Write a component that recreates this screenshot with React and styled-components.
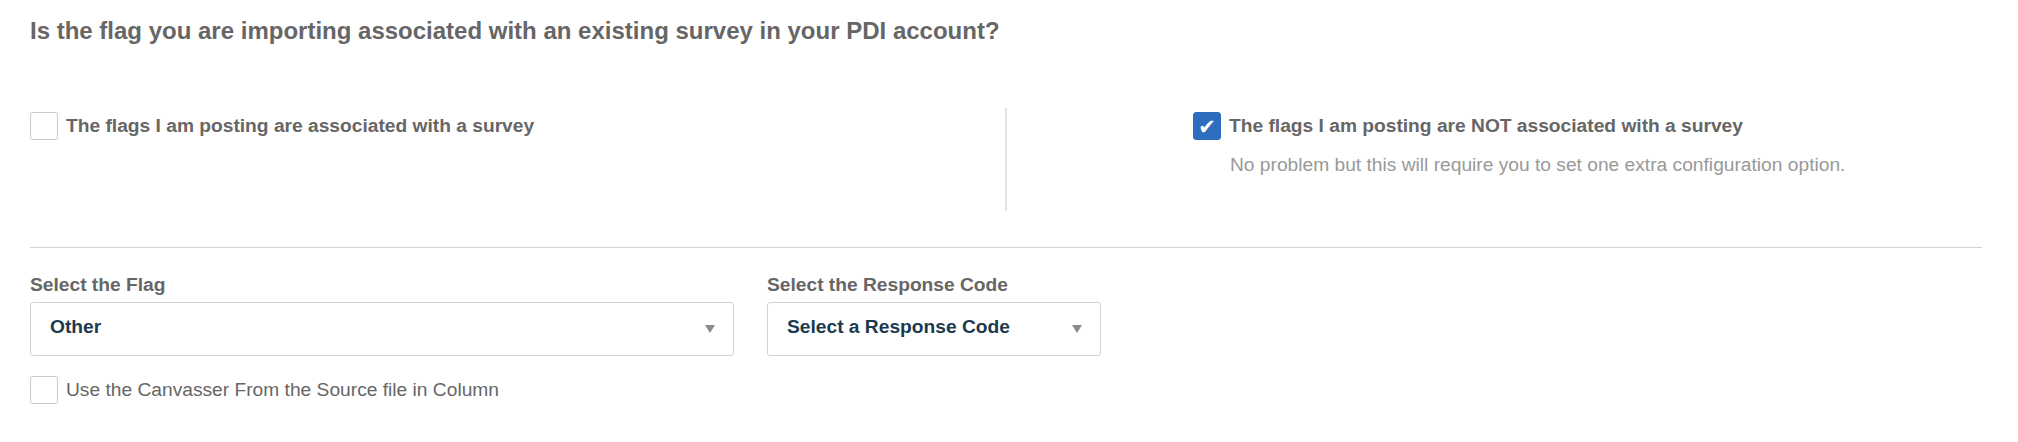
import React from 'react';
import styled, { createGlobalStyle } from 'styled-components';

const GlobalStyle = createGlobalStyle`
  body {
    margin: 0;
    background: #fff;
    font-family: 'Liberation Sans', Arial, sans-serif;
  }
`;

const Page = styled.div`
  padding: 17px 36px 0 30px;
`;

const Heading = styled.h2`
  margin: 0;
  font-size: 24px;
  line-height: 1.2;
  font-weight: 700;
  color: #666;
`;

const OptionGrid = styled.div`
  display: grid;
  grid-template-columns: 975px 1fr;
  height: 103px;
  margin-top: 62px;
`;

const OptionColumn = styled.div`
  padding-top: 4px;
  padding-left: ${(p) => (p.divided ? '186px' : '0')};
  border-left: ${(p) => (p.divided ? '2px solid #e2e2e2' : 'none')};
`;

const CheckRow = styled.label`
  display: flex;
  align-items: center;
  gap: 8px;
  margin-top: ${(p) => p.offset || 0}px;
`;

const Box = styled.span`
  box-sizing: border-box;
  flex: 0 0 28px;
  width: 28px;
  height: 28px;
  border-radius: 3px;
  border: 1px solid ${(p) => (p.checked ? '#2e6cbf' : '#cacaca')};
  background: ${(p) => (p.checked ? '#2e6cbf' : '#fff')};
  color: #fff;
  display: flex;
  align-items: center;
  justify-content: center;
  font-family: 'DejaVu Sans', sans-serif;
  font-size: 21px;
  line-height: 1;
  padding-top: 3px;
`;

const CheckText = styled.span`
  font-size: 19.2px;
  line-height: 1.2;
  font-weight: ${(p) => (p.bold ? 700 : 400)};
  color: #666;
`;

const Hint = styled.p`
  margin: 13px 0 0 37px;
  font-size: 19.2px;
  line-height: 1.2;
  color: #999;
`;

const Rule = styled.hr`
  margin: 36px 0 0;
  border: 0;
  border-top: 1px solid #d4d4d4;
`;

const FieldRow = styled.div`
  display: flex;
  gap: 33px;
  margin-top: 25px;
`;

const Field = styled.div`
  width: ${(p) => p.width}px;
`;

const FieldLabel = styled.div`
  font-size: 19.2px;
  line-height: 1.2;
  font-weight: 700;
  color: #666;
  margin-bottom: 6px;
`;

const SelectBox = styled.div`
  box-sizing: border-box;
  height: 54px;
  border: 1px solid #cfd3d6;
  border-radius: 3px;
  display: flex;
  align-items: center;
  justify-content: space-between;
  padding: 0 18px 4px 19px;
  font-size: 19.2px;
  font-weight: 700;
  color: #1c3a4e;
`;

const Caret = styled.span`
  width: 0;
  height: 0;
  border-left: 5px solid transparent;
  border-right: 5px solid transparent;
  border-top: 8px solid #8c8c8c;
  margin-top: 4px;
`;

function Check({ checked, bold, children, offset }) {
  return (
    <CheckRow offset={offset}>
      <Box checked={checked}>{checked ? '✔' : null}</Box>
      <CheckText bold={bold}>{children}</CheckText>
    </CheckRow>
  );
}

function Select({ label, value, width }) {
  return (
    <Field width={width}>
      <FieldLabel>{label}</FieldLabel>
      <SelectBox>
        <span>{value}</span>
        <Caret />
      </SelectBox>
    </Field>
  );
}

export default function App() {
  return (
    <Page>
      <GlobalStyle />
      <Heading>
        Is the flag you are importing associated with an existing survey in your PDI account?
      </Heading>
      <OptionGrid>
        <OptionColumn>
          <Check bold>The flags I am posting are associated with a survey</Check>
        </OptionColumn>
        <OptionColumn divided>
          <Check checked bold>
            The flags I am posting are NOT associated with a survey
          </Check>
          <Hint>No problem but this will require you to set one extra configuration option.</Hint>
        </OptionColumn>
      </OptionGrid>
      <Rule />
      <FieldRow>
        <Select label="Select the Flag" value="Other" width={704} />
        <Select label="Select the Response Code" value="Select a Response Code" width={334} />
      </FieldRow>
      <Check offset={20}>Use the Canvasser From the Source file in Column</Check>
    </Page>
  );
}
